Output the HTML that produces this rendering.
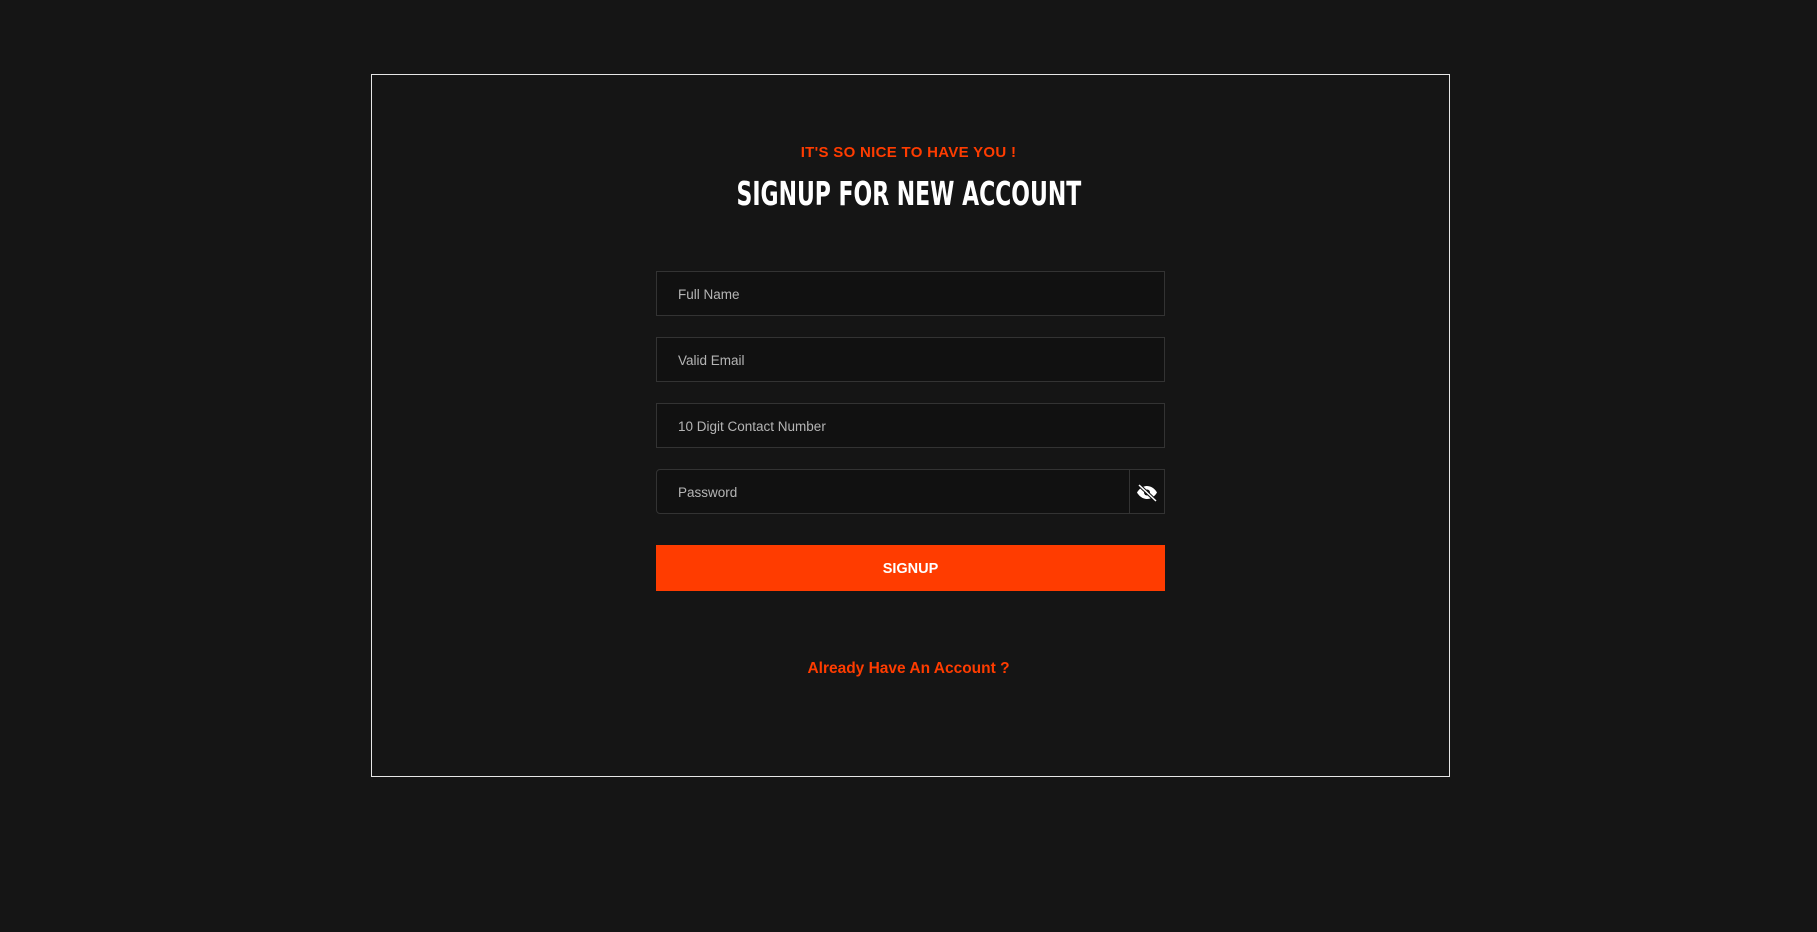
<!DOCTYPE html>
<html><head><style>
html,body{margin:0;padding:0;background:#151515;width:1817px;height:932px;overflow:hidden;font-family:"Liberation Sans",sans-serif}
.box{position:absolute;left:371px;top:74px;width:1079px;height:703px;border:1px solid #e6e6e6;box-sizing:border-box}
.sub{position:absolute;left:0;width:1817px;top:144px;text-align:center;color:#ff3c00;font-weight:bold;font-size:15px;letter-spacing:0.3px}
.title{position:absolute;left:0;width:1817px;top:174px;text-align:center;color:#fff;font-family:"DejaVu Sans Condensed","Liberation Sans",sans-serif;font-weight:bold;font-size:33px;}
.title span{display:inline-block;transform:scaleX(0.74)}
.in{position:absolute;left:656px;width:509px;height:45px;border:1px solid #333;box-sizing:border-box;background:#111;color:#b5b5b5;font-size:13.5px;line-height:45px;padding-left:21px}
.btn{position:absolute;left:656px;top:545px;width:509px;height:46px;background:#ff3c00;color:#fff;font-weight:bold;font-size:14.5px;text-align:center;line-height:48px}
.link{position:absolute;left:0;width:1817px;top:660px;text-align:center;color:#ff3c00;font-weight:bold;font-size:15.5px}
.eye{position:absolute;left:1129px;top:469px;width:36px;height:45px;border:1px solid #333;box-sizing:border-box;background:#111}
</style></head><body>
<div class="box"></div>
<div class="sub">IT'S SO NICE TO HAVE YOU !</div>
<div class="title"><span>SIGNUP FOR NEW ACCOUNT</span></div>
<div class="in" style="top:271px">Full Name</div>
<div class="in" style="top:337px">Valid Email</div>
<div class="in" style="top:403px">10 Digit Contact Number</div>
<div class="in" style="top:469px;width:474px;border-radius:4px 0 0 4px">Password</div>
<div class="eye"><svg width="34" height="43" viewBox="0 0 34 43"><path d="M7 22.5C10 17.5 14 16 17 16s7 1.5 10 6.5c-3 5-7 6.5-10 6.5s-7-1.5-10-6.5z" fill="#fff"/><circle cx="17" cy="22.5" r="3" fill="#111"/><path d="M9 15l17 16" stroke="#111" stroke-width="3.5"/><path d="M9 15l17 16" stroke="#fff" stroke-width="1.5"/></svg></div>
<div class="btn">SIGNUP</div>
<div class="link">Already Have An Account ?</div>
</body></html>
